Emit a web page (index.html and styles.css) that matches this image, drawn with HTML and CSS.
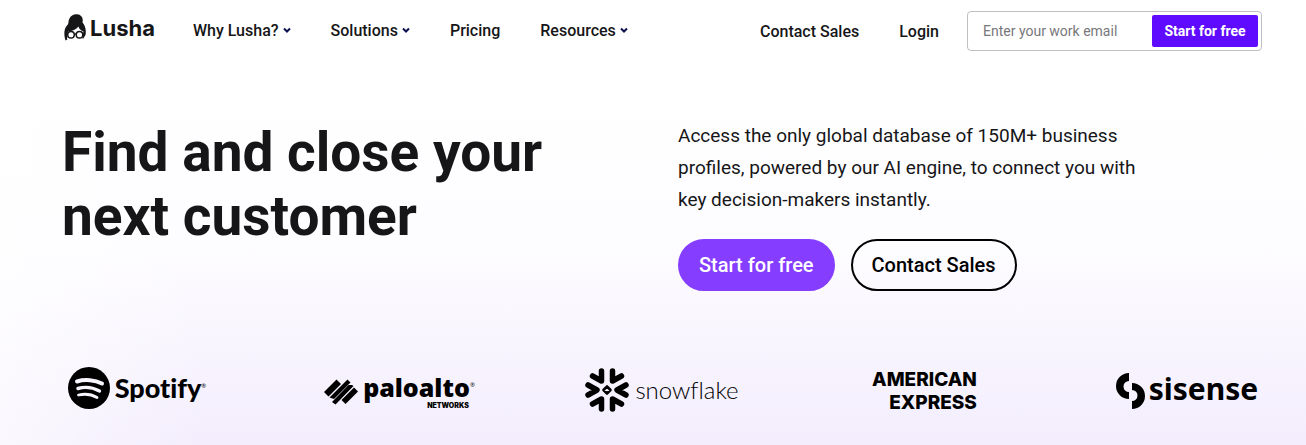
FILE: index.html
```html
<!DOCTYPE html>
<html lang="en">
<head>
<meta charset="utf-8">
<meta name="viewport" content="width=device-width, initial-scale=1">
<title>Lusha</title>
<link rel="stylesheet" href="styles.css">
</head>
<body>
<header class="header">
  <a class="brand" href="#">
    <svg class="brand-mark" viewBox="0 0 22 28" aria-hidden="true">
      <path fill="#161618" d="M1.500 26.500C0 22 -0.500 15 3 11.500C5 10 4 8 5 5.500C6.500 1.500 10 0 13 0.300C17.500 0.700 19.500 4 18.500 8.500C21 11 22.500 16 21.500 21L19 25L4 25Z"/>
      <path fill="#fff" d="M4 17.500C8.500 17 12 15.500 14.500 12.500C15 15 17 16.500 19.500 17.500L18.500 26L14 28H8L3 25Z"/>
      <g fill="#fff" stroke="#161618" stroke-width="1.500"><circle cx="7" cy="20.800" r="3.300"/><circle cx="15.500" cy="20.800" r="3.300"/><path d="M10.300 20.500Q11.200 19.500 12.200 20.500M3.700 20L2 19M18.800 20L20.500 19"/></g>
    </svg>
    <span>Lusha</span>
  </a>
  <nav class="nav">
    <a href="#">Why Lusha?<svg class="chevron" viewBox="0 0 8 6"><path d="M1 1.500L4 4.500L7 1.500"/></svg></a>
    <a href="#">Solutions<svg class="chevron" viewBox="0 0 8 6"><path d="M1 1.500L4 4.500L7 1.500"/></svg></a>
    <a href="#">Pricing</a>
    <a href="#">Resources<svg class="chevron" viewBox="0 0 8 6"><path d="M1 1.500L4 4.500L7 1.500"/></svg></a>
  </nav>
  <div class="account">
    <a href="#">Contact Sales</a>
    <a href="#">Login</a>
  </div>
  <form class="signup">
    <input type="email" placeholder="Enter your work email" aria-label="Work email">
    <button type="button">Start for free</button>
  </form>
</header>
<main>
  <section class="hero">
    <h1>Find and close your next customer</h1>
    <div class="pitch">
      <p>Access the only global database of 150M+ business profiles, powered by our AI engine, to connect you with key decision-makers instantly.</p>
      <div class="actions">
        <a class="pill pill-primary" href="#">Start for free</a>
        <a class="pill pill-outline" href="#">Contact Sales</a>
      </div>
    </div>
  </section>
  <section class="customers" aria-label="Customers">
    <div class="customer spotify">
      <svg width="42" height="42" viewBox="0 0 42 42"><circle cx="21" cy="21" r="21"/><g fill="none" stroke="#f8f5fe" stroke-linecap="round"><path stroke-width="4" d="M9 14.500C17 12 27 13 34 16.500"/><path stroke-width="3.400" d="M10 21.500C17 19.500 25 20.500 31.500 24"/><path stroke-width="2.800" d="M10.500 28C17 26.500 23 27 29 30.500"/></g></svg>
      <span>Spotify<sup>®</sup></span>
    </div>
    <div class="customer paloalto">
      <svg width="34" height="26" viewBox="0 0 34 26"><path d="M0 13L12.500 0.500L17 5L4.500 17.500ZM5.500 18.500L22 2L23.500 0.500L26.500 3.500L10 20ZM8 23L24.500 6L28 6L29.500 7L13 24L11.500 25.500ZM17.500 21L30 8.500L34 12.500L21.500 25Z"/></svg>
      <div class="palo-word"><span>paloalto<sup>®</sup></span><small>NETWORKS</small></div>
    </div>
    <div class="customer snowflake">
      <svg width="44" height="44" viewBox="0 0 44 44"><g fill="none" stroke="#000" stroke-width="5.500" stroke-linecap="round" stroke-linejoin="round"><path d="M16.500 3V13L7.500 8M27.500 3V13L36.500 8M16.500 41V31L7.500 36M27.500 41V31L36.500 36M3 17L12 22L3 27M41 17L32 22L41 27"/><path stroke-width="2.600" d="M22 18.500L25.500 22L22 25.500L18.500 22Z"/></g></svg>
      <span>snowflake</span>
    </div>
    <div class="customer amex"><span>AMERICAN<br>EXPRESS</span></div>
    <div class="customer sisense">
      <svg width="29" height="36" viewBox="0 0 29 36"><path d="M13 0A13 13 0 0 0 13 26V19A5.500 5.500 0 0 1 13 8ZM16 10A13 13 0 0 1 16 36V28A5.500 5.500 0 0 0 16 17Z"/></svg>
      <span>sisense</span>
    </div>
  </section>
</main>
</body>
</html>
```
FILE: styles.css
```css
* { box-sizing: border-box; }
body {
  margin: 0;
  min-height: 100vh;
  color: #161618;
  font-family: Roboto, "Liberation Sans", sans-serif;
  background:
    linear-gradient(90deg, rgba(255, 255, 255, 0.6), rgba(255, 255, 255, 0) 16%),
    linear-gradient(#fff 80px, #fdfcff 250px, #f3edfd 445px);
}
a { color: inherit; text-decoration: none; }
.header {
  display: flex;
  align-items: center;
  padding: 11px 44px 0 64px;
  font-size: 16px;
  font-weight: 500;
}
.brand { display: flex; align-items: center; gap: 4px; padding-bottom: 6px; }
.brand span { font: 700 22px/28px Inter, sans-serif; }
.brand-mark { width: 22px; height: 28px; }
.nav { display: flex; gap: 40px; margin-left: 38px; padding-bottom: 2px; }
.nav a { display: flex; align-items: center; gap: 4px; }
.chevron { width: 8px; height: 6px; fill: none; stroke: #0c1250; stroke-width: 2; }
.account { display: flex; gap: 40px; margin: 0 28px 0 auto; }
.signup {
  display: flex;
  width: 295px;
  height: 40px;
  padding: 3px;
  border: 1px solid #bfbfc3;
  border-radius: 4px;
  background: #fff;
}
.signup input {
  flex: 1;
  min-width: 0;
  padding: 0 0 0 12px;
  border: 0;
  outline: 0;
  background: none;
  font: 400 14px Roboto, sans-serif;
}
.signup input::placeholder { color: #77777b; }
.signup button {
  width: 106px;
  height: 32px;
  padding: 0;
  border: 0;
  border-radius: 2px;
  color: #fff;
  background: #5f0bff;
  font: 700 14px Roboto, sans-serif;
}
.hero {
  display: grid;
  grid-template-columns: 1fr 1fr;
  gap: 32px;
  padding: 69px 44px 0 62px;
}
h1 { margin: 0; max-width: 500px; font: 700 55px/64px Roboto, sans-serif; }
.pitch p { margin: 0; max-width: 480px; font-size: 19px; line-height: 32px; }
.actions { display: flex; gap: 16px; margin-top: 23px; }
.pill {
  display: flex;
  align-items: center;
  height: 52px;
  padding: 0 19px;
  border: 2px solid #000;
  border-radius: 26px;
  color: #000;
  font-size: 20px;
  font-weight: 500;
}
.pill-primary { border-color: #853dff; color: #fff; background: #853dff; }
.customers { display: flex; justify-content: space-between; padding: 71px 44px 30px 62px; color: #000; }
.customer { display: flex; align-items: center; justify-content: center; width: 150px; height: 52px; white-space: nowrap; }
.customer svg { flex: none; }
.customer sup { font-size: 6px; font-weight: 400; line-height: 1; vertical-align: 10px; }
.spotify { gap: 5px; font: 900 27px/36px Lato, sans-serif; font-variant-ligatures: none; }
.paloalto { gap: 5px; padding-top: 8px; }
.palo-word { display: flex; flex-direction: column; font: 800 25px/26px "Open Sans", sans-serif; }
.palo-word small { align-self: flex-end; margin: 2px 6px 0 0; font: 900 7px/8px Inter, sans-serif; }
.snowflake { gap: 6px; padding-top: 3px; font: 300 24px/32px Lato, sans-serif; font-variant-ligatures: none; }
.amex { padding-top: 6px; text-align: right; font: 800 19px/23px Inter, sans-serif; }
.sisense { gap: 4px; padding-top: 5px; font: 700 30px/32px "Noto Sans", sans-serif; }
.sisense span { padding-bottom: 4px; }
```
